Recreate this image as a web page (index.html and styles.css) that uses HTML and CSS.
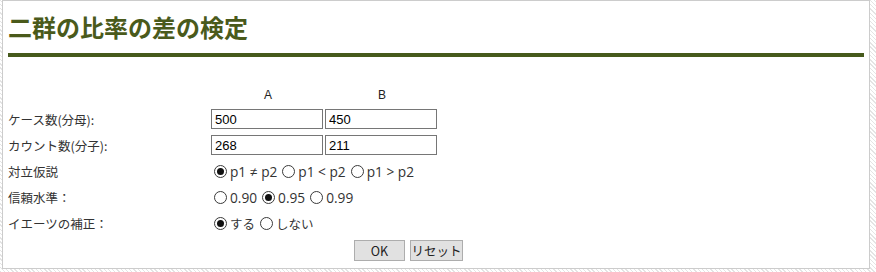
FILE: index.html
```html
<!DOCTYPE html>
<html lang="ja">
<head>
<meta charset="utf-8">
<title>二群の比率の差の検定</title>
<link rel="stylesheet" href="styles.css">
</head>
<body>
<div class="page">
  <h1 class="title">二群の比率の差の検定</h1>
  <form class="form">
    <div class="grid">
      <div></div><div class="colhead">A</div><div class="colhead">B</div>
      <div class="label">ケース数(分母):</div>
      <div class="cell"><input class="num" type="text" value="500"></div>
      <div class="cell"><input class="num" type="text" value="450"></div>
      <div class="label">カウント数(分子):</div>
      <div class="cell"><input class="num" type="text" value="268"></div>
      <div class="cell"><input class="num" type="text" value="211"></div>
      <div class="label">対立仮説</div>
      <div class="opts">
        <label class="opt"><span class="radio on"></span>p1 ≠ p2</label>
        <label class="opt"><span class="radio"></span>p1 &lt; p2</label>
        <label class="opt"><span class="radio"></span>p1 &gt; p2</label>
      </div>
      <div class="label">信頼水準：</div>
      <div class="opts">
        <label class="opt"><span class="radio"></span>0.90</label>
        <label class="opt"><span class="radio on"></span>0.95</label>
        <label class="opt"><span class="radio"></span>0.99</label>
      </div>
      <div class="label row5">イエーツの補正：</div>
      <div class="opts opts-ja">
        <label class="opt"><span class="radio on"></span>する</label>
        <label class="opt"><span class="radio"></span>しない</label>
      </div>
    </div>
    <div class="buttons">
      <button type="button" class="btn">OK</button>
      <button type="button" class="btn btn-reset">リセット</button>
    </div>
  </form>
</div>
</body>
</html>
```
FILE: styles.css
```css
html, body {
  margin: 0;
  padding: 0;
}
body {
  width: 876px;
  height: 272px;
  overflow: hidden;
  background: repeating-linear-gradient(45deg, #e4e4e4 0 1px, #ffffff 1px 3px);
  padding-left: 2px;
  box-sizing: border-box;
  font-family: "Liberation Sans", "Noto Sans CJK JP", sans-serif;
  font-size: 13px;
  color: #222;
}
.page {
  width: 868px;
  height: 269px;
  box-sizing: border-box;
  border: 1px solid #cccccc;
  background: #fff;
  padding: 0 5px 0 5px;
}
.title {
  margin: 0;
  padding-top: 10px;
  height: 42px;
  font-family: "Noto Sans CJK JP", sans-serif;
  font-size: 24px;
  line-height: 32px;
  font-weight: bold;
  color: #4a5a1b;
  border-bottom: 4px solid #465a1c;
  box-sizing: content-box;
}
.form {
  margin: 0;
  padding-top: 27px;
}
.grid {
  display: grid;
  grid-template-columns: 203px 114px 114px;
  grid-template-rows: 22px 26px 26px 26px 26px 27px;
  align-items: center;
}
.colhead {
  text-align: center;
  font-size: 12px;
  padding-left: 1px;
  padding-right: 1px;
}
.label {
  font-family: "Noto Sans CJK JP", sans-serif;
  font-size: 12.5px;
  color: #333;
}
.cell {
  display: flex;
}
.num {
  width: 112px;
  height: 20px;
  box-sizing: border-box;
  border: 1px solid #767676;
  padding: 0 3px;
  font-family: "Liberation Sans", sans-serif;
  font-size: 13px;
  color: #000;
  margin: 0;
}
.opts {
  grid-column: 2 / span 2;
  display: flex;
  align-items: center;
  gap: 2px;
  font-family: "Open Sans", "Noto Sans CJK JP", sans-serif;
  font-size: 13.7px;
  color: #333;
}
.opts-ja {
  font-family: "Noto Sans CJK JP", sans-serif;
  font-size: 12.5px;
}
.opt {
  display: inline-flex;
  align-items: center;
  gap: 3px;
}
.radio {
  width: 13px;
  height: 13px;
  box-sizing: border-box;
  border: 1px solid #3a3a3a;
  border-radius: 50%;
  margin: 0 0 0 3px;
  position: relative;
  background: #fff;
}
.radio.on::after {
  content: "";
  position: absolute;
  left: 2px;
  top: 2px;
  width: 7px;
  height: 7px;
  border-radius: 50%;
  background: #111;
}
.buttons {
  display: flex;
  gap: 5px;
  padding-top: 3px;
  padding-left: 346px;
}
.btn {
  width: 51px;
  height: 21px;
  margin: 0;
  padding: 0;
  border: 1px solid #adadad;
  background: #e1e1e1;
  font-family: "Noto Sans CJK JP", sans-serif;
  font-size: 12.5px;
  color: #222;
}
.btn-reset {
  width: 53px;
}
```
